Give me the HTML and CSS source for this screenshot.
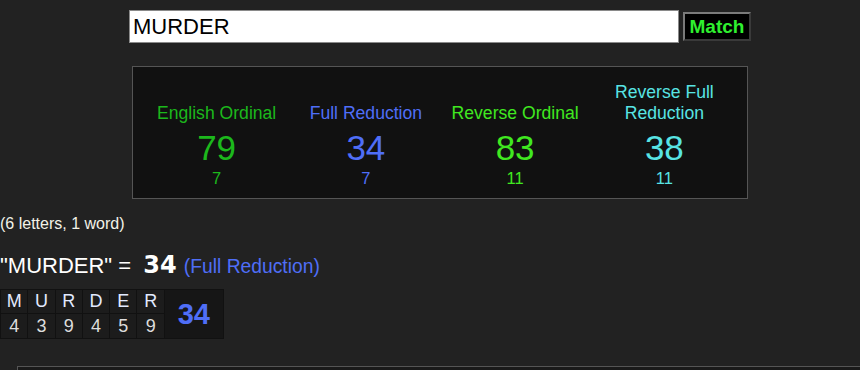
FILE: index.html
```html
<!DOCTYPE html>
<html>
<head>
<meta charset="utf-8">
<link rel="stylesheet" href="styles.css">
</head>
<body>
<div class="search">
  <input class="phrase" type="text" value="MURDER">
  <button class="match">Match</button>
</div>
<div class="results">
  <div class="col eo">
    <div class="label">English Ordinal</div>
    <div class="big">79</div>
    <div class="small">7</div>
  </div>
  <div class="col fr">
    <div class="label">Full Reduction</div>
    <div class="big">34</div>
    <div class="small">7</div>
  </div>
  <div class="col ro">
    <div class="label">Reverse Ordinal</div>
    <div class="big">83</div>
    <div class="small">11</div>
  </div>
  <div class="col rfr">
    <div class="label">Reverse Full<br>Reduction</div>
    <div class="big">38</div>
    <div class="small">11</div>
  </div>
</div>
<p class="count">(6 letters, 1 word)</p>
<div class="heading">"MURDER" = <span class="total">34</span> <span class="cipher">(Full Reduction)</span></div>
<table class="breakdown">
  <tr class="letters">
    <td>M</td><td>U</td><td>R</td><td>D</td><td>E</td><td>R</td>
    <td class="sum" rowspan="2">34</td>
  </tr>
  <tr class="values">
    <td>4</td><td>3</td><td>9</td><td>4</td><td>5</td><td>9</td>
  </tr>
</table>
<div class="lower"></div>
</body>
</html>
```
FILE: styles.css
```css
html, body {
  margin: 0;
  padding: 0;
  height: 370px;
  overflow: hidden;
}
body {
  background: #222;
  font-family: "Liberation Sans", Arial, sans-serif;
  color: #eee;
}
.search {
  display: flex;
  align-items: center;
  gap: 4px;
  margin-left: 129px;
  padding-top: 10px;
}
.phrase {
  box-sizing: border-box;
  width: 550px;
  height: 33px;
  margin: 0;
  border: 1px solid #8a8a8a;
  padding: 0 3px;
  background: #fff;
  color: #000;
  font-family: "Liberation Sans", Arial, sans-serif;
  font-size: 22px;
  outline: none;
}
.match {
  box-sizing: border-box;
  width: 68px;
  height: 29px;
  margin: 0;
  padding: 0;
  background: #000;
  color: #2ff02f;
  border: 2px solid;
  border-color: #7a7a7a #3a3a3a #3a3a3a #7a7a7a;
  font-family: "Liberation Sans", Arial, sans-serif;
  font-weight: bold;
  font-size: 19px;
}
.results {
  box-sizing: border-box;
  width: 616px;
  margin: 23px 0 0 132px;
  padding: 15px 8px 11px 9px;
  background: #111;
  border: 1px solid #555;
  display: grid;
  grid-template-columns: repeat(4, 1fr);
  text-align: center;
}
.col {
  display: flex;
  flex-direction: column;
}
.label {
  font-size: 17.6px;
  line-height: 21px;
  min-height: 42px;
  display: flex;
  align-items: flex-end;
  justify-content: center;
}
.big {
  font-size: 35px;
  line-height: 40px;
  margin-top: 4px;
}
.small {
  font-size: 16.5px;
  line-height: 18px;
  margin-top: 1px;
}
.eo { color: #1cb81c; }
.fr { color: #4f6ef7; }
.ro { color: #40e820; }
.rfr { color: #58e4e4; }
.count {
  margin: 16px 0 0 0;
  font-size: 16px;
  line-height: 18px;
  color: #f2f2e8;
}
.heading {
  margin-top: 20px;
  font-size: 22px;
  line-height: 24px;
  height: 24px;
  color: #fff;
}
.total {
  margin-left: 6px;
  font-family: "DejaVu Sans", Verdana, sans-serif;
  font-weight: bold;
  font-size: 24px;
}
.cipher {
  margin-left: 1px;
  font-size: 19.3px;
  color: #4f6ef7;
}
.breakdown {
  margin-top: 12px;
  border-collapse: separate;
  border-spacing: 1px;
  background: #111;
}
.breakdown td {
  padding: 0;
  width: 26.3px;
  text-align: center;
  background: #1c1c1c;
  font-size: 18px;
}
.letters td {
  height: 23px;
  color: #e2eaff;
}
.values td {
  height: 24px;
  color: #ddd;
}
.breakdown td.sum {
  width: 58px;
  background: #161616;
  color: #4f6ef7;
  font-weight: bold;
  font-size: 29px;
}
.lower {
  margin: 27px -20px 0 17px;
  height: 100px;
  background: #1a1a1a;
  border: 1px solid #555;
}
```
